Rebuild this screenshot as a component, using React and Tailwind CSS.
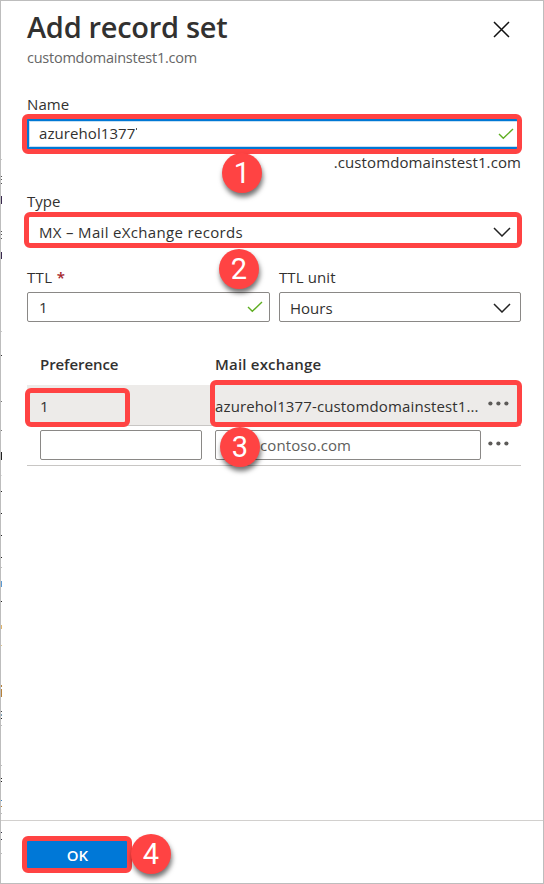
import React from "react";

const Check = () => (
  <svg width="16" height="12" viewBox="0 0 16 12" fill="none" stroke="#5fae22" strokeWidth="1.4">
    <path d="M1 6l4.3 4.3L15 1" />
  </svg>
);

const Chevron = () => (
  <svg width="18" height="10" viewBox="0 0 18 10" fill="none" stroke="#222" strokeWidth="1.5">
    <path d="M1 1l8 8 8-8" />
  </svg>
);

const Dots = () => (
  <svg width="21" height="5" viewBox="0 0 21 5" fill="#5c5a58">
    <circle cx="2.4" cy="2.5" r="2.1" />
    <circle cx="10.4" cy="2.5" r="2.1" />
    <circle cx="18.4" cy="2.5" r="2.1" />
  </svg>
);

const Frame = ({ className }) => (
  <div className={`absolute rounded-[6px] border-[5px] border-[#ff4343] ${className}`} />
);

const Badge = ({ n, className }) => (
  <div
    className={`absolute flex h-10 w-10 items-center justify-center rounded-full bg-[#ff4343] font-['Roboto','Liberation_Sans',sans-serif] text-[29px] leading-none text-white shadow-[1px_4px_5px_rgba(0,0,0,0.55)] ${className}`}
  >
    {n}
  </div>
);

// Slivers of the page behind the panel, visible along its left edge: [top, height, colour]
const slivers = [
  [159, 1, "#c8c8c8"], [176, 1, "#555"], [179, 1, "#555"], [183, 1, "#555"],
  [196, 8, "#3a2a50"], [231, 1, "#555"], [234, 1, "#555"], [238, 1, "#555"],
  [252, 7, "#3a2a50"], [331, 1, "#c8c8c8"], [355, 1, "#333"], [401, 1, "#777"],
  [430, 1, "#777"], [452, 8, "#222"], [475, 1, "#ddd"], [491, 1, "#222"],
  [513, 1, "#222"], [535, 1, "#222"], [557, 1, "#222"], [567, 1, "#bbb"],
  [581, 6, "#5b9bd5"], [601, 1, "#222"], [625, 4, "#e2b66c"], [645, 1, "#e2c68c"],
  [685, 2, "#b8823a"], [689, 8, "#b8823a"], [711, 1, "#444"], [714, 2, "#7aa0b8"],
  [718, 1, "#222"], [725, 1, "#bbb"], [765, 1, "#bbb"], [778, 1, "#222"],
  [781, 1, "#222"], [800, 1, "#3a80c0"], [806, 1, "#b8823a"], [813, 1, "#bbb"],
  [832, 1, "#334"], [839, 1, "#334"], [853, 1, "#bbb"],
];

export default function App() {
  return (
    <div className="relative flex h-[884px] w-[544px] flex-col overflow-hidden border border-[#bdbdbd] bg-white font-['Open_Sans','Noto_Sans',sans-serif] text-[15px] leading-5 text-[#323130]">
      <header className="flex h-[66px] justify-between pl-[26px] pr-[33px] pt-[6px]">
        <div>
          <h1 className="whitespace-nowrap text-[29px] font-semibold leading-10 tracking-[-0.3px]">Add record set</h1>
          <p className="pt-px text-[14.5px] tracking-[-0.24px] text-[#666]">customdomainstest1.com</p>
        </div>
        <svg className="mt-[14px]" width="17" height="17" viewBox="0 0 17 17" fill="none" stroke="#111" strokeWidth="1.5">
          <path d="M1 1l15 15M16 1L1 16" />
        </svg>
      </header>

      <main className="flex flex-1 flex-col pl-[26px] pr-[22px] pt-[27px]">
        <label className="tracking-[0.1px]">Name</label>
        <div className="mt-[5px] flex h-[30px] items-center justify-between border-2 border-[#0078d4] pl-[10px] pr-[5px] shadow-[inset_0_0_0_1px_#c7e0f4]">
          <span className="flex pb-[2px] tracking-[0.08px]">
            azurehol1377
            <i className="ml-px mt-[5px] h-[2px] w-px bg-[#555]" />
          </span>
          <Check />
        </div>
        <p className="mt-[3px] text-right tracking-[0.09px]">.customdomainstest1.com</p>

        <label className="mt-[19px]">Type</label>
        <div className="mt-[5px] flex h-[30px] items-center justify-between pl-[12px] pr-[10px] pt-[2px]">
          <span className="tracking-[0.33px]">MX – Mail eXchange records</span>
          <Chevron />
        </div>

        <div className="mt-[21px] grid grid-cols-[243px_242px] gap-x-[9px]">
          <div>
            <label className="tracking-[0.35px]">
              TTL <span className="font-semibold text-[#a4262c]">*</span>
            </label>
            <div className="mt-[5px] flex h-[30px] items-center justify-between rounded-[2px] border border-[#8a8886] pl-[11px] pr-[6px]">
              <span>1</span>
              <Check />
            </div>
          </div>
          <div>
            <label className="tracking-[0.1px]">TTL unit</label>
            <div className="mt-[5px] flex h-[30px] items-center justify-between rounded-[2px] border border-[#8a8886] pl-[10px] pr-[9px] pt-px">
              <span>Hours</span>
              <Chevron />
            </div>
          </div>
        </div>

        <div className="mt-[32px] grid grid-cols-[175px_1fr] pl-[13px] font-semibold">
          <span className="tracking-[-0.08px]">Preference</span>
          <span className="tracking-[0.2px]">Mail exchange</span>
        </div>
        <div className="mt-[11px] grid h-[41px] grid-cols-[175px_266px_1fr] border-b border-[#c8c6c4] bg-[#edebe9] pl-[13px] pt-[11px]">
          <span>1</span>
          <span className="whitespace-nowrap tracking-[0.13px]">azurehol1377-customdomainstest1...</span>
          <span className="flex pl-[7px] pt-[5px]"><Dots /></span>
        </div>
        <div className="flex h-[40px] border-b border-[#c8c6c4] pl-[13px] pt-[4px]">
          <div className="h-[30px] w-[162px] rounded-[2px] border border-[#8a8886]" />
          <div className="ml-[13px] flex h-[30px] w-[266px] items-center rounded-[2px] border border-[#8a8886] pl-[44px] text-[#605e5c]">
            <span className="tracking-[0.1px]">contoso.com</span>
          </div>
          <span className="flex pl-[7px] pt-[11px]"><Dots /></span>
        </div>
      </main>

      <footer className="h-[63px] border-t border-[#d2d0ce] pl-[26px] pt-[20px]">
        <button className="flex h-[27px] w-[101px] items-center justify-center bg-[#0078d7] font-semibold text-white">OK</button>
      </footer>

      <div>
        {slivers.map(([top, height, color]) => (
          <i key={top} className="absolute left-0 w-px" style={{ top: top - 1, height, background: color }} />
        ))}
      </div>

      <Frame className="left-[21px] top-[113px] h-[40px] w-[500px]" />
      <Frame className="left-[23px] top-[211px] h-[36px] w-[498px]" />
      <Frame className="left-[24px] top-[387px] h-[39px] w-[105px]" />
      <Frame className="left-[209px] top-[379px] h-[47px] w-[312px]" />
      <Frame className="left-[21px] top-[835px] h-[37px] w-[110px]" />
      <Badge n="1" className="left-[221px] top-[152px]" />
      <Badge n="2" className="left-[218px] top-[248px]" />
      <Badge n="3" className="left-[219px] top-[426px]" />
      <Badge n="4" className="left-[130px] top-[833px]" />
    </div>
  );
}
